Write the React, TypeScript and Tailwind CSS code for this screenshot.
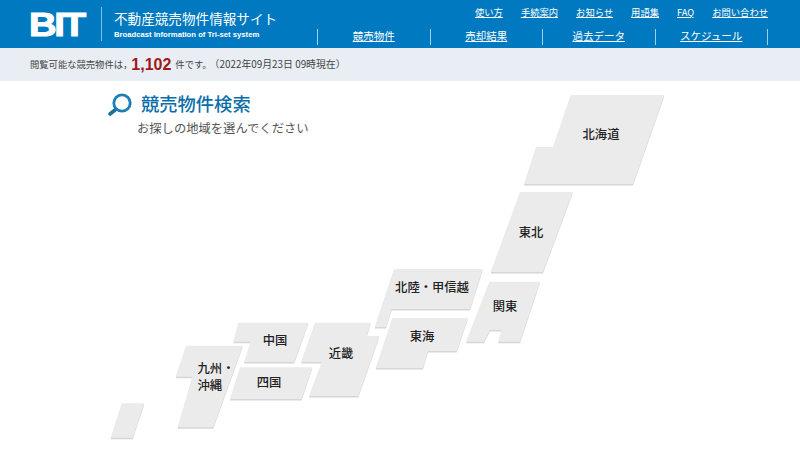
import React from "react";

const topLinks = ["使い方", "手続案内", "お知らせ", "用語集", "FAQ", "お問い合わせ"];
const mainLinks = ["競売物件", "売却結果", "過去データ", "スケジュール"];

// page coordinates, the map svg starts at y=81
const regions = [
    "570.7,95 664.3,95 633,184 524,184 536,147 553,147",
    "520,192 572.7,192 543,272 490.7,272",
    "394,269 482.7,269 470,309 391.7,309 386,327 374.7,327",
    "489.3,281.7 540,281.7 520,341.7 498,341.7 501.7,330 490,330 484,341.7 466,341.7",
    "392.3,318 467.7,318 456.7,351 428,351 423,368 375.7,368",
    "315,322.7 370.7,322.7 366.7,336 379.3,336 358.3,396 309,396 321.7,362 301,362",
    "238.3,322.7 308.3,322.7 294.3,362 244,362 250.7,341.7 233.3,341.7",
    "240,367.3 312.3,367.3 301.7,399 230,399",
    "186,345.7 242.7,345.7 213.3,427.3 177.7,427.3 192.3,376.7 175.7,376.7",
    "121.7,403.3 144.3,403.3 132.7,437.7 110.7,437.7",
];

const labelClass =
    "absolute -translate-x-1/2 -translate-y-1/2 whitespace-nowrap text-[12.3px] leading-[17px] font-medium text-[#222]";

export default function App() {
    return (
        <div className="w-[800px] h-[456px] overflow-hidden bg-white font-['Noto_Sans_CJK_JP','Noto_Sans',sans-serif]">
            <header className="h-[48px] bg-[#0079c0] flex text-white">
                <div className="w-[102px] h-[34px] mt-[7px] border-r border-[#7fbfe3] flex items-center">
                    <span className="ml-[29px] w-[56px] text-[33px] leading-none font-black tracking-[-2px] font-['Liberation_Sans',sans-serif] origin-left scale-x-[1.16] [-webkit-text-stroke:1px_white]">
                        BIT
                    </span>
                </div>
                <div className="ml-[12px] w-[203px] pt-[11px]">
                    <div className="text-[13.6px] leading-[15px] whitespace-nowrap">不動産競売物件情報サイト</div>
                    <div className="mt-[3px] text-[7.7px] leading-[11px] font-bold whitespace-nowrap font-['Liberation_Sans',sans-serif]">
                        Broadcast Information of Tri-set system
                    </div>
                </div>
                <nav className="flex-1 flex flex-col">
                    <div className="h-[29px] pt-[6px] pr-[32px] flex justify-end gap-[18px] text-[9.3px] leading-[13px]">
                        {topLinks.map(link => (
                            <a key={link} className="underline font-['Noto_Sans_CJK_JP','Liberation_Sans',sans-serif]">{link}</a>
                        ))}
                    </div>
                    <div className="flex w-[451px] h-[16px] border-l border-[#9fd0ec]">
                        {mainLinks.map(link => (
                            <a
                                key={link}
                                className="flex-1 border-r border-[#9fd0ec] text-center text-[10.5px] leading-[14px] underline"
                            >
                                {link}
                            </a>
                        ))}
                    </div>
                </nav>
            </header>

            <div className="h-[33px] bg-[#e9eef4] pl-[30px] flex items-center text-[9.3px] text-[#444] whitespace-nowrap">
                <span>閲覧可能な競売物件は，</span>
                <span className="-ml-[1px] mr-[4px] text-[16px] font-bold text-[#a01818] font-['Liberation_Sans',sans-serif]">1,102</span>
                <span>件です。</span>
                <span className="-ml-[2px] text-[9.9px]">（2022年09月23日 09時現在）</span>
            </div>

            <main className="relative h-[375px]">
                <svg className="absolute inset-0" width="800" height="375" viewBox="0 81 800 375">
                    {regions.map(points => (
                        <g key={points}>
                            <polygon points={points} fill="#d6d6d6" transform="translate(0 1.5)" />
                            <polygon points={points} fill="#ebebeb" />
                        </g>
                    ))}
                </svg>

                <div className="relative flex pl-[107px] pt-[11px]">
                    <svg width="26" height="24" viewBox="0 0 26 24" className="mt-[1px]">
                        <circle cx="15" cy="10" r="8.2" fill="none" stroke="#1b7fb5" strokeWidth="2.8" />
                        <line x1="8" y1="17" x2="3" y2="21" stroke="#1f6f9c" strokeWidth="3.6" strokeLinecap="round" />
                    </svg>
                    <div className="ml-[8px] -mt-[2px]">
                        <h1 className="text-[18.3px] leading-[26px] font-medium text-[#0c6ea8]">競売物件検索</h1>
                        <p className="-ml-[4px] mt-[3px] text-[12.3px] leading-[18px] text-[#555]">お探しの地域を選んでください</p>
                    </div>
                </div>

                <a className={`${labelClass} left-[601px] top-[53px]`}>北海道</a>
                <a className={`${labelClass} left-[531px] top-[151px]`}>東北</a>
                <a className={`${labelClass} left-[505px] top-[225px]`}>関東</a>
                <a className={`${labelClass} left-[432px] top-[206px]`}>北陸・甲信越</a>
                <a className={`${labelClass} left-[422px] top-[255px]`}>東海</a>
                <a className={`${labelClass} left-[275px] top-[259px]`}>中国</a>
                <a className={`${labelClass} left-[341px] top-[272px]`}>近畿</a>
                <a className={`${labelClass} left-[269px] top-[301px]`}>四国</a>
                <a className={`${labelClass} left-[216px] top-[296px]`}>九州・<br />沖縄</a>
            </main>
        </div>
    );
}
